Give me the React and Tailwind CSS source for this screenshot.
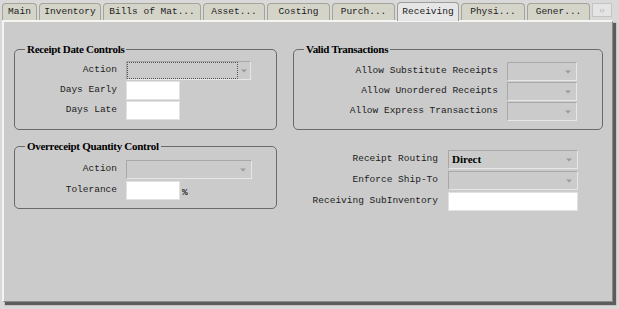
const tabs = [
  { label: "Main", w: "w-[35px]" },
  { label: "Inventory", w: "w-[62px]" },
  { label: "Bills of Mat...", w: "w-[98px]" },
  { label: "Asset...", w: "w-[62px]" },
  { label: "Costing", w: "w-[63px]" },
  { label: "Purch...", w: "w-[63px]" },
  { label: "Receiving", w: "w-[62px]", active: true },
  { label: "Physi...", w: "w-[64px]" },
  { label: "Gener...", w: "w-[63px]" },
];

const mono = "font-['Liberation_Mono','DejaVu_Sans_Mono',monospace] text-[9.5px] text-[#1c1c1c]";
const serif = "font-['Liberation_Serif','Times_New_Roman',serif]";

function Arrow() {
  return (
    <svg width="6" height="4" viewBox="0 0 6 4" className="mr-[5px] shrink-0">
      <path d="M0 0.5 L6 0.5 L3 3.5 Z" fill="#9a9a9a" />
    </svg>
  );
}

// disabled combo box
function Combo({ w, focus, value }) {
  return (
    <div
      className={`${w} h-[19px] flex items-center justify-between bg-[#cbcbcb] border border-t-[#a8a8a8] border-l-[#a8a8a8] border-r-[#e6e6e6] border-b-[#e6e6e6]`}
    >
      <div
        className={`flex-1 h-full flex items-center pl-[3px] ${
          focus ? "border border-dotted border-[#555]" : ""
        }`}
      >
        {value && <span className={`${serif} text-[11px] font-bold text-black`}>{value}</span>}
      </div>
      {!focus && <Arrow />}
      {focus && (
        <div className="w-[12px] flex justify-center">
          <svg width="6" height="4" viewBox="0 0 6 4">
            <path d="M0 0.5 L6 0.5 L3 3.5 Z" fill="#9a9a9a" />
          </svg>
        </div>
      )}
    </div>
  );
}

function Field({ w }) {
  return <div className={`${w} h-[19px] bg-white border border-[#e2e2e2]`} />;
}

function Group({ title, className, children }) {
  return (
    <fieldset className={`border border-[#6a6a6a] rounded-[5px] ${className}`}>
      <legend className={`${serif} ml-[10px] px-[2px] text-[11px] leading-[12px] font-bold text-black tracking-[-0.3px]`}>
        {title}
      </legend>
      {children}
    </fieldset>
  );
}

export default function App() {
  return (
    <div className="w-[619px] h-[309px] bg-[#d9d9d9] overflow-hidden">
      {/* Tabs */}
      <div className="flex items-end h-[20px] pl-[2px] gap-[2px]">
        {tabs.map((t) => (
          <div
            key={t.label}
            className={`${t.w} ${mono} flex items-center justify-center rounded-t-[4px] border border-b-0 ${
              t.active
                ? "h-[19px] bg-[#e6e6e6] border-[#9c9c9c] -mb-[1px] relative z-10"
                : "h-[17px] bg-[#d4d4c9] border-[#a4a49a]"
            }`}
          >
            {t.label}
          </div>
        ))}
        <div className="w-[20px] h-[14px] mb-[3px] bg-[#e4e4e4] border border-[#c4c4c4] flex items-center justify-center text-[8px] text-[#b0b0b0] leading-none">
          ‹›
        </div>
      </div>

      {/* Panel */}
      <div className="ml-[2px] w-[611px] h-[282px] bg-[#cbcbcb] border-l-2 border-t-2 border-l-[#f4f4f0] border-t-[#f4f4f0] border-r border-b border-r-[#8a8a8a] border-b-[#8a8a8a] shadow-[3px_3px_1px_#5c5c5c] pl-[10px] pt-[21px]">
        <div className="grid grid-cols-[263px_310px] gap-x-[16px] gap-y-[10px] items-start">
          <Group title="Receipt Date Controls" className="pt-[6px] pb-[9px]">
            <div className="grid grid-cols-[102px_auto] gap-x-[9px] gap-y-[1px] items-center justify-start">
              <span className={`${mono} text-right`}>Action</span>
              <Combo w="w-[125px]" focus />
              <span className={`${mono} text-right`}>Days Early</span>
              <Field w="w-[54px]" />
              <span className={`${mono} text-right`}>Days Late</span>
              <Field w="w-[54px]" />
            </div>
          </Group>

          <Group title="Valid Transactions" className="pt-[7px] pb-[8px]">
            <div className="grid grid-cols-[204px_auto] gap-x-[9px] gap-y-[1px] items-center justify-start">
              <span className={`${mono} text-right`}>Allow Substitute Receipts</span>
              <Combo w="w-[70px]" />
              <span className={`${mono} text-right`}>Allow Unordered Receipts</span>
              <Combo w="w-[70px]" />
              <span className={`${mono} text-right`}>Allow Express Transactions</span>
              <Combo w="w-[70px]" />
            </div>
          </Group>

          <Group title="Overreceipt Quantity Control" className="pt-[8px] pb-[8px]">
            <div className="grid grid-cols-[102px_auto] gap-x-[9px] gap-y-[2px] items-center justify-start">
              <span className={`${mono} text-right`}>Action</span>
              <Combo w="w-[126px]" />
              <span className={`${mono} text-right`}>Tolerance</span>
              <div className="flex items-end gap-[2px]">
                <Field w="w-[54px]" />
                <span className={`${mono} font-bold`}>%</span>
              </div>
            </div>
          </Group>

          <div className="mt-[10px] grid grid-cols-[145px_auto] gap-x-[10px] gap-y-[2px] items-center justify-start">
            <span className={`${mono} text-right`}>Receipt Routing</span>
            <Combo w="w-[130px]" value="Direct" />
            <span className={`${mono} text-right`}>Enforce Ship-To</span>
            <Combo w="w-[130px]" />
            <span className={`${mono} text-right`}>Receiving SubInventory</span>
            <Field w="w-[130px]" />
          </div>
        </div>
      </div>
    </div>
  );
}
